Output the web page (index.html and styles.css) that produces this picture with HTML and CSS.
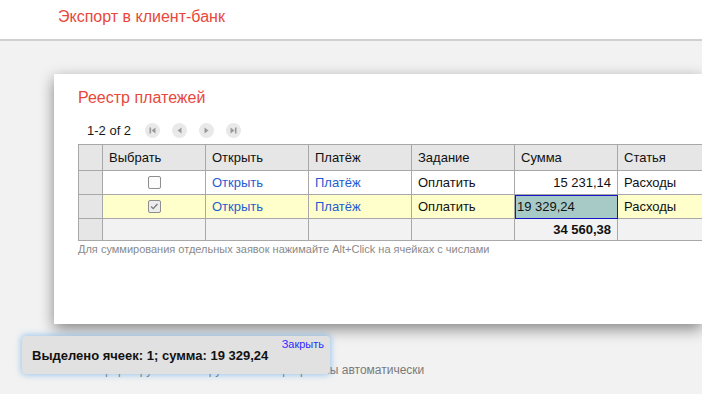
FILE: index.html
```html
<!DOCTYPE html>
<html lang="ru">
<head>
<meta charset="utf-8">
<title>Экспорт в клиент-банк</title>
<link rel="stylesheet" href="styles.css">
</head>
<body>
<header class="topbar"><h1 class="page-title">Экспорт в клиент-банк</h1></header>
<main class="page">
  <p class="bg-note">Файлы формируются и загружаются в программы автоматически</p>
</main>

<section class="modal">
  <h2 class="modal-title">Реестр платежей</h2>
  <div class="pager">
    <span class="pager-info">1-2 of 2</span>
    <span class="pager-btn"><svg viewBox="0 0 15 15" width="15" height="15"><rect x="4.5" y="4.5" width="1.6" height="6" fill="#9a9a9a"/><path d="M10.5 4.5 L6.5 7.5 L10.5 10.5 Z" fill="#9a9a9a"/></svg></span>
    <span class="pager-btn"><svg viewBox="0 0 15 15" width="15" height="15"><path d="M9.5 4.5 L5.5 7.5 L9.5 10.5 Z" fill="#9a9a9a"/></svg></span>
    <span class="pager-btn"><svg viewBox="0 0 15 15" width="15" height="15"><path d="M5.5 4.5 L9.5 7.5 L5.5 10.5 Z" fill="#9a9a9a"/></svg></span>
    <span class="pager-btn"><svg viewBox="0 0 15 15" width="15" height="15"><path d="M4.5 4.5 L8.5 7.5 L4.5 10.5 Z" fill="#9a9a9a"/><rect x="8.9" y="4.5" width="1.6" height="6" fill="#9a9a9a"/></svg></span>
  </div>
  <table class="grid">
    <colgroup>
      <col class="c-rh"><col class="c-w"><col class="c-w"><col class="c-w"><col class="c-w"><col class="c-w"><col class="c-w">
    </colgroup>
    <tr class="hdr">
      <td class="rh"></td><td>Выбрать</td><td>Открыть</td><td>Платёж</td><td>Задание</td><td>Сумма</td><td>Статья</td>
    </tr>
    <tr class="row">
      <td class="rh"></td>
      <td class="center"><span class="cb"></span></td>
      <td><a class="lnk">Открыть</a></td>
      <td><a class="lnk">Платёж</a></td>
      <td>Оплатить</td>
      <td class="num">15 231,14</td>
      <td>Расходы</td>
    </tr>
    <tr class="row sel">
      <td class="rh"></td>
      <td class="center"><span class="cb checked"><svg viewBox="0 0 13 13" width="11" height="11"><path d="M2.5 6.5 L5 9 L10 3.5" fill="none" stroke="#7a7a7a" stroke-width="1.6"/></svg></span></td>
      <td><a class="lnk">Открыть</a></td>
      <td><a class="lnk">Платёж</a></td>
      <td>Оплатить</td>
      <td class="cell-active">19 329,24</td>
      <td>Расходы</td>
    </tr>
    <tr class="total">
      <td class="rh"></td><td></td><td></td><td></td><td></td><td class="num strong">34 560,38</td><td></td>
    </tr>
  </table>
  <p class="hint">Для суммирования отдельных заявок нажимайте Alt+Click на ячейках с числами</p>
</section>

<div class="sum-pop">
  <span class="sum-text">Выделено ячеек: 1; сумма: 19 329,24</span>
  <a class="sum-close">Закрыть</a>
</div>
</body>
</html>
```
FILE: styles.css
```css
html, body {
  margin: 0;
  padding: 0;
  overflow: hidden;
}
body {
  background: #f2f2f2;
  font-family: "Liberation Sans", Arial, sans-serif;
  color: #111;
  width: 702px;
  height: 394px;
  position: relative;
}
.topbar {
  background: #fff;
  border-bottom: 2px solid #d0d0d0;
  padding: 6px 0 0 58px;
  height: 33px;
}
.page-title {
  margin: 0;
  font-weight: normal;
  font-size: 16px;
  line-height: 22px;
  color: #e8483b;
}
.page {
  padding: 0 0 0 60px;
}
.bg-note {
  margin: 322px 0 0 0;
  font-size: 12px;
  line-height: 14px;
  color: #7a7a7a;
  white-space: nowrap;
}
.modal {
  position: absolute;
  left: 54px;
  top: 74px;
  width: 648px;
  height: 250px;
  box-sizing: border-box;
  background: #fff;
  box-shadow: 0 5px 14px rgba(0, 0, 0, 0.45);
  padding: 12px 0 0 24px;
}
.modal-title {
  margin: 0;
  font-weight: normal;
  font-size: 16px;
  line-height: 24px;
  color: #e8483b;
}
.pager {
  margin-top: 10px;
  height: 21px;
  display: flex;
  align-items: center;
  padding-left: 9px;
}
.pager-info {
  font-size: 13px;
  color: #1a1a1a;
  margin-right: 14px;
}
.pager-btn {
  width: 15px;
  height: 15px;
  border-radius: 50%;
  background: #e9e9e9;
  margin-right: 12px;
  display: flex;
}
.grid {
  margin-top: 3px;
  border-collapse: collapse;
  table-layout: fixed;
  width: 624px;
  font-size: 13px;
}
.c-rh { width: 24px; }
.c-w { width: 103px; }
.grid td {
  border: 1px solid #a8a8a8;
  padding: 0 6px;
  white-space: nowrap;
  overflow: hidden;
}
.grid td:last-child {
  border-right: none;
}
.hdr { height: 26px; background: #e6e6e6; }
.row { height: 24px; background: #fff; }
.row.sel { background: #ffffcc; }
.total { height: 22px; background: #f2f2f2; }
.grid td.rh { background: #e6e6e6; padding: 0; }
.center { text-align: center; }
.num { text-align: right; }
.strong { font-weight: bold; }
.lnk { color: #1f5cd1; text-decoration: none; }
.cb {
  display: inline-block;
  width: 11px;
  height: 11px;
  border: 1px solid #8e8e8e;
  border-radius: 2px;
  background: #fbfbfb;
  vertical-align: middle;
  position: relative;
  top: -1px;
}
.cb.checked {
  background: #ececec;
}
.cb svg { display: block; }
.grid td.cell-active {
  background: #a7cac7;
  outline: 1px solid #1414c8;
  outline-offset: -1px;
  padding: 0 2px;
}
.hint {
  margin: 1px 0 0 0;
  font-size: 11px;
  line-height: 14px;
  color: #8a8a8a;
}
.sum-pop {
  position: absolute;
  left: 22px;
  top: 336px;
  width: 308px;
  height: 38px;
  box-sizing: border-box;
  background: #e1e1e1;
  border-radius: 4px;
  box-shadow: 0 0 6px 1px rgba(80, 160, 230, 0.55);
  padding: 10px 0 0 10px;
}
.sum-text {
  font-size: 13px;
  font-weight: bold;
  line-height: 16px;
  color: #111;
}
.sum-close {
  position: absolute;
  right: 6px;
  top: 1px;
  font-size: 11px;
  line-height: 14px;
  color: #2c2cff;
}
```
